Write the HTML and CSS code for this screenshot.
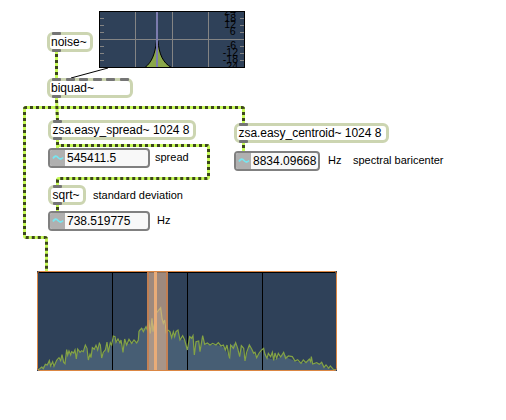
FILE: index.html
```
<!DOCTYPE html>
<html lang="en">
<head>
<meta charset="utf-8">
<title>Spectral spread patch</title>
<link rel="stylesheet" href="styles.css">
</head>
<body>
<main class="patch">
<svg class="layer" width="506" height="420">
  <path class="wire" d="M108 68L71 78"/>
  <g class="cable">
    <path d="M56.500 52V78"/><path d="M56.500 98L57.500 120"/>
    <path d="M57 107.500H242Q243.500 107.500 243.500 109V123"/>
    <path d="M57 107.500H26Q24.500 107.500 24.500 109V236Q24.500 237.500 26 237.500H45Q46.500 237.500 46.500 239V271"/>
    <path d="M57.500 140V148"/>
    <path d="M57.500 140V145.500H207Q208.500 145.500 208.500 147V177Q208.500 178.500 207 178.500H59Q57.500 178.500 57.500 180V185"/>
    <path d="M57.500 205V211"/><path d="M243.500 143V151"/>
  </g>
  <g class="cable dash">
    <path d="M56.500 54V78"/><path d="M56.500 100L57.500 120"/>
    <path d="M61 107.500H242Q243.500 107.500 243.500 109V123"/>
    <path d="M51 107.500H26Q24.500 107.500 24.500 109V236Q24.500 237.500 26 237.500H45Q46.500 237.500 46.500 239V271"/>
    <path d="M57.500 142V148"/>
    <path d="M61 145.500H207Q208.500 145.500 208.500 147V177Q208.500 178.500 207 178.500H59Q57.500 178.500 57.500 180V185"/>
    <path d="M57.500 207V211"/><path d="M243.500 145V151"/>
  </g>
</svg>

<svg class="filter" width="146" height="57" viewBox="99 11 146 57">
  <rect class="screen" x="99" y="11" width="146" height="57"/>
  <path class="grid" d="M135.500 12V67M172.500 12V67M208.500 12V67M100 39.500H244M100 18.500H104M100 25.500H104M100 32.500H104M100 46.500H104M100 53.500H104M100 60.500H104M240 18.500H244M240 25.500H244M240 32.500H244M240 46.500H244M240 53.500H244M240 60.500H244"/>
  <path class="peak" d="M145 67.500C152 62 155 54 156.500 41H158C159 54 163 63 171.500 67.500Z"/>
  <path class="marker" d="M157 12V67"/>
  <g class="scale">
    <text x="236" y="15">24</text><text x="236" y="22">18</text><text x="236" y="28">12</text><text x="235.500" y="35">6</text>
    <text x="236" y="49">-6</text><text x="238" y="56">-12</text><text x="238" y="63">-18</text><text x="238" y="70">-24</text>
  </g>
  <rect class="frame" x="99.500" y="11.500" width="145" height="56"/>
</svg>

<div class="object noise"><i class="port"></i><span>noise~</span><i class="port out"></i></div>
<div class="object biquad"><div class="ports"><i></i><i></i><i></i><i></i><i></i><i></i></div><span>biquad~</span><i class="port out"></i></div>
<div class="object spread"><i class="port"></i><span>zsa.easy_spread~ 1024 8</span><i class="port out"></i></div>
<div class="object centroid"><i class="port"></i><span>zsa.easy_centroid~ 1024 8</span><i class="port out"></i></div>
<div class="object sqrt"><i class="port"></i><span>sqrt~</span><i class="port out"></i></div>

<div class="number n-spread"><b><svg width="12" height="8"><path d="M1 4.500Q3.500 .5 6 3.500T11 3.500"/></svg></b><span>545411.5</span></div>
<div class="number n-centroid"><b><svg width="12" height="8"><path d="M1 4.500Q3.500 .5 6 3.500T11 3.500"/></svg></b><span>8834.09668</span></div>
<div class="number n-sqrt"><b><svg width="12" height="8"><path d="M1 4.500Q3.500 .5 6 3.500T11 3.500"/></svg></b><span>738.519775</span></div>

<span class="note t-spread">spread</span>
<span class="note t-hz1">Hz</span>
<span class="note t-bary">spectral baricenter</span>
<span class="note t-dev">standard deviation</span>
<span class="note t-hz2">Hz</span>

<svg class="spectrum" width="300" height="100" viewBox="37 271 300 100">
  <defs>
    <path id="low" d="M24 314L27 313 35 306 40 311 46 298 52 300 58 287 62 303 68 290 72 304 80 286 87 278 92 287 96 269 101 292 105 296 110 254 113 270 117 258 122 270 125 260 131 264 135 255 139 282 143 252 150 262 155 257 160 260 166 240 171 250 175 285 180 268 183 278 187 248 193 253 198 241 203 255 208 235 211 240 215 279 220 262 226 255 231 231 235 262 241 233 245 240 250 213 255 215 258 232 264 222 270 234 273 225 279 262 284 222 290 240 297 223 305 235 312 225 320 234 325 225 327 198"/>
    <path id="mid" d="M57 198L65 190 70 200 78 185 82 195 86 165 91 205 96 160 99 200 104 172 108 145 115 137 122 128 126 160 130 175 134 165 139 205 143 195 150 200 155 218 160 200 164 215 168 200 174 195 180 225 188 212 194 225 202 255 209 215 215 220 219 212 223 270 228 230 236 228 240 260 245 230 248 212 254 238 262 234 270 240 278 235 288 240 295 233 303 243 310 240 316 255 321 240 327 275"/>
    <path id="high" d="M12 275L14 278 17 240 25 250 32 233 38 250 44 275 49 242 56 250 60 288 65 262 73 240 80 252 86 265 90 262 95 278 102 265 110 255 116 250 120 268 126 280 130 265 137 275 142 262 146 286 150 264 155 280 160 265 167 276 176 262 182 280 190 273 202 275 210 288 218 284 228 295 235 285 243 293 253 282 257 290 259 275 263 297 275 293 283 298 290 292 297 307 303 300 311 310 316 303 325 313 332 315"/>
    <clipPath id="area"><path transform="translate(30 265) scale(.33333)" d="M24 318V314L35 306 46 300 58 290 62 303 72 302 80 286 92 284 97 272 105 294 110 258 122 268 135 258 139 280 143 255 160 260 168 243 175 283 183 275 187 250 203 252 208 238 215 277 226 257 231 235 235 260 245 238 250 214 258 230 270 232 279 260 284 225 290 238 305 233 320 232 325 225 327 198 335 190 348 188 356 168 361 203 366 163 369 198 378 146 392 130 396 160 409 203 420 200 425 216 444 197 450 223 464 225 472 253 479 216 489 214 493 268 498 230 506 230 510 258 518 214 524 238 558 240 573 243 586 253 597 275 602 242 617 235 629 273 634 244 645 286 658 243 671 265 680 276 701 253 711 278 731 284 752 276 761 264 775 280 795 288 820 294 838 284 848 296 868 297 875 294 882 306 896 309 917 315V318Z"/></clipPath>
  </defs>
  <rect class="screen" x="37" y="271" width="300" height="100"/>
  <rect class="energy" x="37" y="271" width="300" height="100" clip-path="url(#area)"/>
  <path class="bar" d="M37 272.500H337M112.500 272V370M187.500 272V370M262.500 272V370"/>
  <g class="trace">
    <use href="#low" transform="translate(30 265) scale(.33333)"/>
    <use href="#mid" transform="translate(120 265) scale(.33333)"/>
    <use href="#high" transform="translate(225 265) scale(.33333)"/>
  </g>
  <rect class="range" x="147" y="271" width="21" height="99"/>
  <path class="edge" d="M148 271V370M167 271V370"/>
  <path class="center" d="M155.500 271V370"/>
  <rect class="outline" x="37.500" y="271.500" width="299" height="99" rx="2"/>
</svg>
</main>
</body>
</html>
```

FILE: styles.css
```
body { margin: 0; background: #fff; color: #000; font-family: "Liberation Sans", Arial, sans-serif; }
.patch { position: relative; width: 506px; height: 420px; overflow: hidden; }
.patch > * { position: absolute; }
.layer { left: 0; top: 0; }
.wire { stroke: #000; stroke-width: 1; }
.cable { fill: none; stroke: #c6fa58; stroke-width: 3; }
.dash { stroke: #3c461c; stroke-dasharray: 3 3; }

.object { box-sizing: border-box; height: 20px; border: 3px solid #ccd5b1; border-radius: 6px; background: #fff; padding-left: 1px; font-size: 12px; line-height: 14px; white-space: nowrap; }
.object span { display: block; }
.port, .ports { position: absolute; left: 2px; top: -3px; }
.port, .ports i { width: 9px; height: 3px; border-radius: 1px; background: #757575; }
.port.out { top: 14px; }
.ports { display: flex; gap: 4.500px; }
.noise { left: 47px; top: 32px; width: 46px; }
.biquad { left: 47px; top: 78px; width: 86px; }
.spread { left: 48px; top: 120px; width: 148px; letter-spacing: -.04px; }
.centroid { left: 234px; top: 123px; width: 155px; letter-spacing: -.04px; }
.sqrt { left: 48px; top: 185px; width: 38px; }

.number { box-sizing: border-box; display: flex; height: 20px; border: 2px solid #808080; border-radius: 4px; background: #f8f8f8; overflow: hidden; font-size: 12px; line-height: 16px; }
.number b { display: flex; align-items: center; justify-content: center; width: 15px; margin-right: 2px; background: #b0b0b0; }
.number b path { fill: none; stroke: #78e6f0; stroke-width: 1.800; }
.n-spread { left: 48px; top: 148px; width: 102px; }
.n-centroid { left: 234px; top: 151px; width: 86px; }
.n-sqrt { left: 48px; top: 211px; width: 102px; }

.note { font-size: 11px; line-height: 14px; white-space: nowrap; }
.t-spread { left: 155px; top: 150px; }
.t-hz1 { left: 328px; top: 153px; }
.t-bary { left: 353px; top: 153px; }
.t-dev { left: 93px; top: 188px; }
.t-hz2 { left: 157px; top: 213px; }
.spread, .centroid, .sqrt { padding-left: 1.500px; }

.screen { fill: #2f4159; }
.filter { left: 99px; top: 11px; }
.grid { stroke: #848484; }
.peak { fill: #8aa74a; stroke: #000; stroke-width: 1; }
.marker { stroke: #7b7bae; stroke-width: 2; }
.scale { font-size: 10.500px; text-anchor: end; fill: #000; }
.frame { fill: none; stroke: #000; }

.spectrum { left: 37px; top: 271px; }
.energy { fill: #475e74; }
.bar { stroke: #000; }
.trace { fill: none; stroke: #84a345; stroke-width: 3.600; }
.range { fill: #f0bd98; fill-opacity: .58; }
.edge { stroke: #cc7c46; stroke-width: 1.500; fill: none; }
.center { stroke: #e9ac78; stroke-width: 3; }
.outline { fill: none; stroke: #dc8743; }
```
